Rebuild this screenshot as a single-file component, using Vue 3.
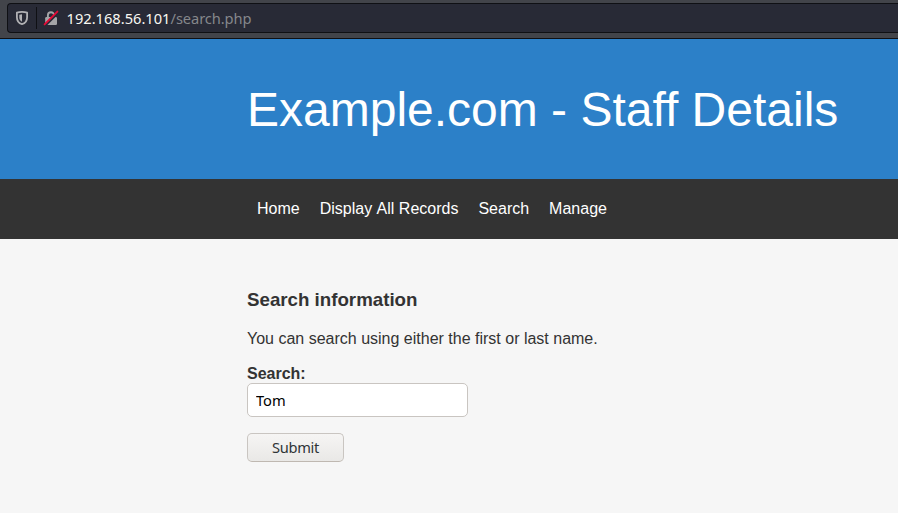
<script setup>
import { ref } from 'vue'

const query = ref('Tom')
const links = ['Home', 'Display All Records', 'Search', 'Manage']
</script>

<template>
  <div class="window">
    <div class="toolbar">
      <div class="urlbar">
        <svg class="shield" width="14" height="16" viewBox="0 0 14 16">
          <path d="M7 1.900C5.200 1.900 3.300 2.200 1.900 2.700V7.300C1.900 10.800 3.700 13.300 7 14.100C10.300 13.300 12.100 10.800 12.100 7.300V2.700C10.700 2.200 8.800 1.900 7 1.900Z" fill="none" stroke="#b1b1b4" stroke-width="1.800" stroke-linejoin="round" />
          <path d="M7 4.300L4.300 4.800V7.500C4.300 9.500 5.300 11 7 11.700Z" fill="#b1b1b4" />
        </svg>
        <span class="divider"></span>
        <svg class="lock" width="16" height="16" viewBox="0 0 16 16">
          <path d="M4.900 8V5.300A3.100 3.100 0 0 1 11.100 5.300V8" fill="none" stroke="#a5a5a8" stroke-width="1.900" />
          <rect x="2.200" y="7" width="11.800" height="8" rx="1.200" fill="#a5a5a8" />
          <path d="M2.200 15.700L15 2.900" stroke="#282a36" stroke-width="2.200" />
          <path d="M1.600 14.400L14.400 1.600" stroke="#e60a36" stroke-width="1.900" stroke-linecap="round" />
        </svg>
        <span class="address"><span class="host">192.168.56.101</span><span class="path">/search.php</span></span>
      </div>
    </div>

    <header class="banner">
      <h1>Example.com - Staff Details</h1>
    </header>

    <nav class="menu">
      <a v-for="link in links" :key="link">{{ link }}</a>
    </nav>

    <main class="content">
      <h3>Search information</h3>
      <p>You can search using either the first or last name.</p>
      <form @submit.prevent>
        <label for="search">Search:</label>
        <input id="search" v-model="query" type="text" />
        <button type="submit">Submit</button>
      </form>
    </main>
  </div>
</template>

<style>
body {
  margin: 0;
  background: #f6f6f6;
}
</style>

<style scoped>
.window {
  height: 513px;
  overflow: hidden;
  display: flex;
  flex-direction: column;
  font-family: "Liberation Sans", Arial, sans-serif;
  font-size: 16px;
  color: #333;
  background: #f6f6f6;
}
.toolbar {
  box-sizing: border-box;
  flex: none;
  height: 39px;
  padding: 3px 0 0 7px;
  background: #42444a;
  border-bottom: 1px solid #0f1014;
}
.urlbar {
  box-sizing: border-box;
  height: 30px;
  display: flex;
  align-items: center;
  background: #282a36;
  border: 1px solid #0f1014;
  border-right: 0;
  border-radius: 4px 0 0 4px;
}
.shield {
  margin-left: 7px;
}
.divider {
  width: 1px;
  height: 22px;
  margin: 0 6px 0 7px;
  background: #0f1014;
}
.address {
  margin-left: 7.500px;
  font-family: "Noto Sans", sans-serif;
  font-size: 14.667px;
  line-height: 28px;
}
.host {
  color: #f8f8f2;
}
.path {
  color: #85878b;
  letter-spacing: -0.080px;
}
.banner {
  flex: none;
  height: 140px;
  padding-left: 247px;
  background: #2c80c8;
  color: #fff;
}
.banner h1 {
  margin: 0;
  font-size: 48px;
  font-weight: 400;
  line-height: 142px;
  white-space: nowrap;
}
.menu {
  flex: none;
  box-sizing: border-box;
  height: 60px;
  padding-left: 257px;
  display: flex;
  align-items: center;
  gap: 20px;
  background: #333;
  color: #fff;
  font-kerning: none;
}
.content {
  padding: 50px 0 0 247px;
}
h3 {
  margin: 0;
  font-size: 18.72px;
  line-height: 22px;
}
p {
  margin: 19px 0 17px;
  line-height: 18px;
}
form {
  display: flex;
  flex-direction: column;
  align-items: flex-start;
}
label {
  font-weight: 700;
  line-height: 18px;
}
input,
button {
  box-sizing: border-box;
  margin: 0;
  border: 1px solid #c9c5c1;
  border-radius: 5px;
  font-family: "Noto Sans", sans-serif;
  font-size: 14.667px;
}
input {
  width: 221px;
  height: 34px;
  padding: 0 8px;
  background: #fff;
  color: #000;
}
button {
  width: 97px;
  height: 29px;
  margin-top: 16px;
  padding: 0;
  line-height: 27px;
  letter-spacing: -0.350px;
  color: #2e3436;
  background: linear-gradient(#f6f5f4, #e9e8e6);
  border-bottom-color: #bfb8b1;
}
</style>
